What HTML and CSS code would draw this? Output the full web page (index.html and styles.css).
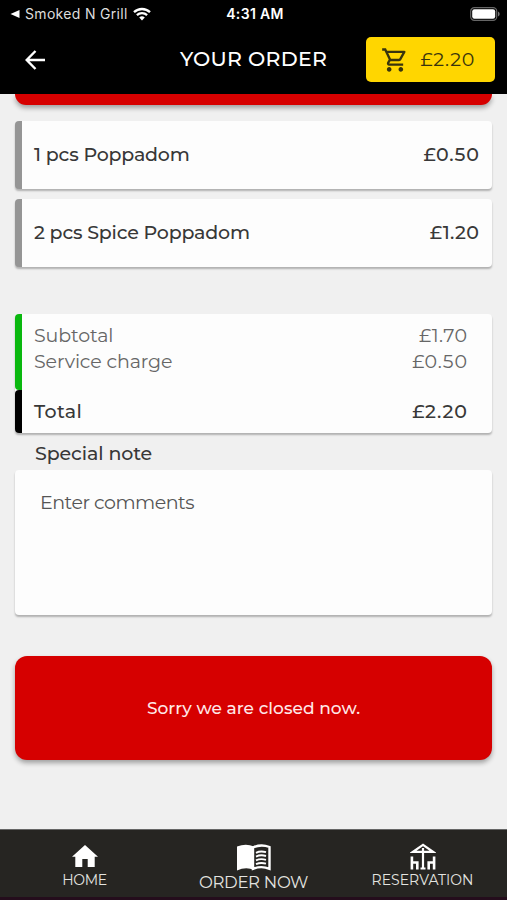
FILE: index.html
```html
<!DOCTYPE html>
<html lang="en">
<head>
<meta charset="utf-8">
<title>Your Order</title>
<link rel="stylesheet" href="styles.css">
</head>
<body>
<div class="app">
  <header class="header">
    <div class="status">
      <div class="carrier">
        <svg class="back-app" viewBox="0 0 9 8"><path d="M0 4L9 0v8z"/></svg>
        <span class="carrier-name">Smoked N Grill</span>
        <svg class="wifi" viewBox="0 0 18 14"><path d="M1 5.2a11.6 11.6 0 0 1 16 0M3.9 8.2a7.4 7.4 0 0 1 10.2 0" /><path class="dot" d="M6.2 10.6a4.2 4.2 0 0 1 5.6 0L9 13.6z"/></svg>
      </div>
      <span class="time">4:31 AM</span>
      <svg class="battery" viewBox="0 0 30 14"><rect class="shell" x=".7" y=".7" width="26" height="12.6" rx="3.6"/><rect class="charge" x="2.2" y="2.2" width="23" height="9.6" rx="2.2"/><path class="cap" d="M28 4.6q1.7.8 1.7 2.4T28 9.4z"/></svg>
    </div>
    <div class="nav">
      <svg class="back" viewBox="0 0 20 20"><path d="M19.5 10H1.5M10 1L1.2 10 10 19"/></svg>
      <h1 class="title">YOUR ORDER</h1>
      <div class="cart">
        <svg class="cart-icon" viewBox="0 0 24 24"><path d="M15.55 13c.75 0 1.41-.41 1.75-1.03l3.58-6.49A.996.996 0 0 0 20.01 4H5.21l-.94-2H1v2h2l3.6 7.59-1.35 2.44C4.52 15.37 5.48 17 7 17h12v-2H7l1.1-2h7.45zM6.16 6h12.15l-2.76 5H8.53L6.16 6zM7 18c-1.1 0-1.99.9-1.99 2S5.9 22 7 22s2-.9 2-2-.9-2-2-2zm10 0c-1.1 0-1.99.9-1.99 2s.89 2 1.99 2 2-.9 2-2-.9-2-2-2z"/></svg>
        <span class="cart-total">£2.20</span>
      </div>
    </div>
  </header>
  <main class="content">
    <div class="banner-edge"></div>
    <div class="item"><span class="item-name">1 pcs Poppadom</span><span class="price">£0.50</span></div>
    <div class="item"><span class="item-name">2 pcs Spice Poppadom</span><span class="price narrow">£1.20</span></div>
    <section class="summary">
      <div class="charges">
        <div class="row"><span class="charge-name">Subtotal</span><span class="price narrow">£1.70</span></div>
        <div class="row"><span class="charge-name">Service charge</span><span class="price">£0.50</span></div>
      </div>
      <div class="total"><span class="total-name">Total</span><span class="price">£2.20</span></div>
    </section>
    <h2 class="note-label">Special note</h2>
    <div class="note">Enter comments</div>
    <div class="closed"><span>Sorry we are closed now.</span></div>
  </main>
  <footer class="tabs">
    <div class="tab home">
      <svg viewBox="0 0 26 24"><path d="M13 1L0 12.800h3.300V23h7v-8h5.400v8h7V12.800H26z"/></svg>
      <span>HOME</span>
    </div>
    <div class="tab order">
      <svg viewBox="0 0 36 28"><path d="M1 2.500Q10-1 18 2.500v23.500Q10 22.500 1 26.500z"/><path class="page" d="M17 3.500Q25-.3 33.500 3V24.800q-8-3.300-16.500 0z"/><path class="lines" d="M20 8.800q4.500-2.200 10-.6M20 12.600q4.500-2.200 10-.6M20 16.400q4.500-2.200 10-.6M20 20.200q4.500-2.200 10-.6"/></svg>
      <span>ORDER NOW</span>
    </div>
    <div class="tab reservation">
      <svg viewBox="0 0 26 27"><path class="roof" d="M13 1.800L3 8.800h20zM13 5v21M10.500 25.500h5"/><path class="chairs" d="M1.900 13.500V26.500M1.500 19.500H7.300V26.500M24.100 13.500V26.500M24.500 19.500H18.700V26.500"/></svg>
      <span>RESERVATION</span>
    </div>
  </footer>
</div>
</body>
</html>
```
FILE: styles.css
```css
* { box-sizing: border-box; }
body { margin: 0; font-family: Montserrat, Inter, sans-serif; color: #383838; background: #f0f0f0; }
h1, h2 { margin: 0; font-weight: 400; }
svg { display: block; flex: none; }
span { white-space: nowrap; }
.app { width: 507px; height: 900px; display: flex; flex-direction: column; overflow: hidden; }

.header { height: 94px; flex: none; background: #000; color: #fff; }
.status { height: 27px; display: grid; grid-template-columns: 1fr auto 1fr; align-items: center; padding: 0 7px 0 10px; font-family: Inter, sans-serif; }
.carrier { display: flex; align-items: center; }
.back-app { width: 10px; height: 8px; fill: #fff; margin-right: 5px; }
.carrier-name { font-size: 14px; color: #ddd; letter-spacing: .32px; width: 103px; }
.wifi { width: 18px; height: 14px; margin-left: 5px; fill: none; stroke: #fff; stroke-width: 2.3; }
.wifi .dot { fill: #fff; stroke: none; }
.time { font-size: 14px; font-weight: 600; letter-spacing: .35px; }
.battery { width: 30px; height: 14px; justify-self: end; }
.shell { fill: none; stroke: #666; stroke-width: 1.2; }
.charge { fill: #fff; }
.cap { fill: #777; }
.nav { height: 65px; display: flex; align-items: center; padding: 0 12px 0 25px; }
.back { width: 21px; height: 20px; fill: none; stroke: #fff; stroke-width: 2.4; }
.title { width: 187px; margin-left: 134px; padding-bottom: 2px; font-size: 20.500px; font-weight: 500; letter-spacing: .3px; white-space: nowrap; }
.cart { width: 129px; height: 45px; margin-left: auto; border-radius: 5px; background: #ffd600; color: #38340d; display: flex; align-items: center; padding-left: 15px; }
.cart-icon { width: 28px; height: 28px; fill: #38340d; }
.cart-total { margin-left: 11px; font-size: 19px; letter-spacing: .9px; }

.content { flex: 1; display: flex; flex-direction: column; padding: 0 15px; min-height: 0; }
.banner-edge { height: 11px; flex: none; background: #d60000; border-radius: 0 0 12px 12px; box-shadow: 0 3px 5px #0005; margin-bottom: 16px; }
.item { height: 68px; flex: none; margin-bottom: 10px; border-left: 7px solid #959595; border-radius: 4px; background: #fdfdfd; box-shadow: 0 2px 2px #0004; display: flex; justify-content: space-between; align-items: center; padding: 0 13px 2px 12px; font-size: 19px; font-weight: 500; }
.item-name { letter-spacing: -.2px; }
.price { letter-spacing: .9px; margin-right: -.9px; }
.narrow { letter-spacing: .4px; margin-right: -.4px; }
.summary { height: 119px; flex: none; margin-top: 37px; border-radius: 4px; background: #fdfdfd; box-shadow: 0 2px 2px #0004; font-size: 19px; }
.charges { height: 76px; border-left: 7px solid #0ab80f; border-radius: 4px; padding: 8px 25px 0 12px; color: #666; }
.charge-name { letter-spacing: -.12px; }
.row { height: 26px; display: flex; justify-content: space-between; align-items: center; }
.total { height: 43px; border-left: 7px solid #000; border-radius: 4px; padding: 0 25px 0 12px; display: flex; justify-content: space-between; align-items: center; font-weight: 500; }
.total-name { letter-spacing: .4px; }
.note-label { height: 37px; flex: none; padding: 9px 0 0 20px; font-size: 19px; font-weight: 500; letter-spacing: -.1px; line-height: 24px; }
.note { height: 145px; flex: none; border-radius: 4px; background: #fdfdfd; box-shadow: 0 2px 2px #0004; padding: 21px 25px; font-size: 19px; letter-spacing: -.5px; line-height: 24px; color: #555; }
.closed { height: 104px; flex: none; margin-top: 41px; border-radius: 12px; background: #d60000; box-shadow: 0 3px 5px #0005; color: #ffe8e8; display: flex; align-items: center; justify-content: center; padding-bottom: 1px; font-size: 17px; font-weight: 500; letter-spacing: .05px; }

.tabs { height: 71px; flex: none; background: #262522; color: #e4e4e0; border-top: 1px solid #666; border-bottom: 3px solid #240d1c; display: flex; }
.tab { display: flex; flex-direction: column; align-items: center; width: 169px; font-size: 14px; line-height: 18px; }
.tab svg { fill: #fff; }
.home { letter-spacing: -.4px; }
.home svg { width: 26px; height: 24px; margin: 14px 0 3px; }
.order svg { width: 36px; height: 28px; margin: 14px 0 1px; }
.order { font-size: 16.500px; letter-spacing: -.3px; }
.order .page { fill: none; stroke: #fff; stroke-width: 2.4; }
.order .lines { fill: none; stroke: #fff; stroke-width: 1.9; }
.tab.reservation svg { width: 26px; height: 27px; margin: 13px 0 1px; fill: none; stroke: #fff; stroke-width: 2.2; }
.reservation .chairs { stroke-width: 2.6; }
```
